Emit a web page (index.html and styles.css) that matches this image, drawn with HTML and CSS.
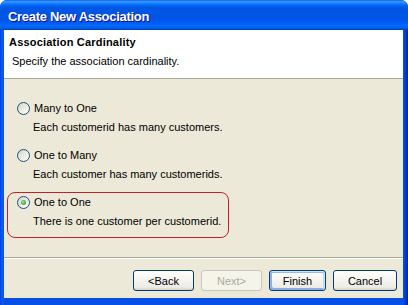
FILE: index.html
```html
<!DOCTYPE html>
<html>
<head>
<meta charset="utf-8">
<link rel="stylesheet" href="styles.css">
</head>
<body>
<div class="window">
  <div class="titlebar"><span class="title">Create New Association</span></div>
  <div class="client">
    <div class="header">
      <div class="h-title">Association Cardinality</div>
      <div class="h-desc">Specify the association cardinality.</div>
    </div>
    <div class="body">
      <div class="option">
        <div class="opt-label"><span class="radio"></span><span>Many to One</span></div>
        <div class="opt-desc">Each customerid has many customers.</div>
      </div>
      <div class="option">
        <div class="opt-label"><span class="radio"></span><span>One to Many</span></div>
        <div class="opt-desc">Each customer has many customerids.</div>
      </div>
      <div class="option selected">
        <div class="opt-label"><span class="radio checked"></span><span>One to One</span></div>
        <div class="opt-desc">There is one customer per customerid.</div>
      </div>
    </div>
    <div class="footer">
      <button class="btn btn-back">&lt;Back</button>
      <button class="btn btn-next" disabled>Next&gt;</button>
      <button class="btn btn-finish">Finish</button>
      <button class="btn btn-cancel">Cancel</button>
    </div>
  </div>
</div>
</body>
</html>
```

FILE: styles.css
```css
html, body {
  margin: 0;
  padding: 0;
  background: #ffffff;
}
body {
  font-family: "Liberation Sans", Arial, sans-serif;
  font-size: 11px;
  color: #000;
}
.window {
  width: 408px;
  height: 305px;
  display: flex;
  flex-direction: column;
  background: linear-gradient(90deg, #0831D9 0, #0858EE 1px, #0A5AF0 3px, #0650E8 4px, #0650E8 403px, #0044D6 405px, #001FA0 408px);
  border-radius: 7px 7px 0 0;
  overflow: hidden;
  box-sizing: border-box;
}
.titlebar {
  height: 30px;
  flex: none;
  display: flex;
  align-items: center;
  padding: 3px 0 0 8px;
  box-sizing: border-box;
  background: linear-gradient(to bottom, #0058EE 0%, #3A93FF 4%, #288EFF 8%, #127DFF 12%, #036FFC 16%, #0262EE 20%, #0057E5 24%, #0054E3 56%, #0055EB 66%, #005BF5 76%, #026AFE 86%, #0062EF 92%, #0052D6 96%, #0040AB 100%);
}
.title {
  color: #fff;
  font-weight: bold;
  font-size: 13px;
  letter-spacing: -0.3px;
  text-shadow: 1px 1px #0F1089;
}
.client {
  flex: 1;
  margin: 0 5px 7px 4px;
  background: #ECE9D8;
  display: flex;
  flex-direction: column;
}
.header {
  height: 49px;
  flex: none;
  background: #fff;
  box-sizing: border-box;
  padding: 5px 0 0 5px;
  border-bottom: 1px solid #ACA899;
}
.h-title {
  font-weight: bold;
  line-height: 14px;
  letter-spacing: 0.2px;
}
.h-desc {
  line-height: 14px;
  margin-top: 5px;
  padding-left: 3px;
}
.body {
  flex: 1;
  padding: 19px 0 0 3px;
  border-bottom: 1px solid #ACA899;
}
.option {
  width: 222px;
  height: 46px;
  box-sizing: border-box;
  border: 1px solid transparent;
  border-radius: 8px;
  padding: 2px 0 0 9px;
  margin-bottom: 1px;
}
.option.selected {
  border-color: #CC1E2A;
}
.opt-label {
  display: flex;
  align-items: center;
  gap: 4px;
  height: 14px;
  line-height: 14px;
}
.opt-desc {
  margin-top: 5px;
  margin-left: 16px;
  line-height: 14px;
}
.radio {
  width: 13px;
  height: 13px;
  box-sizing: border-box;
  border-radius: 50%;
  border: 1px solid #1C5180;
  background: linear-gradient(135deg, #D6D3C6 0%, #E9E8E0 45%, #FFFFFF 100%);
  display: flex;
  align-items: center;
  justify-content: center;
  flex: none;
}
.radio.checked::after {
  content: "";
  width: 5px;
  height: 5px;
  border-radius: 50%;
  background: radial-gradient(circle at 40% 40%, #A9E29D 0%, #4DBB45 50%, #21A121 100%);
}
.footer {
  flex: none;
  border-top: 1px solid #fff;
  padding: 11px 6px 7px 0;
  display: flex;
  justify-content: flex-end;
  gap: 7px;
}
.btn {
  height: 21px;
  box-sizing: border-box;
  border: 1px solid #003C74;
  border-radius: 3px;
  background: linear-gradient(to bottom, #FFFFFF 0%, #F7F6F1 40%, #ECEBE6 86%, #D6D0C5 100%);
  font-family: "Liberation Sans", Arial, sans-serif;
  font-size: 11px;
  color: #000;
  padding: 0;
  margin: 0;
}
.btn-back { width: 61px; }
.btn-next {
  width: 61px;
  border-color: #C9C7BA;
  color: #ACA899;
  background: #F5F4EA;
}
.btn-finish {
  width: 57px;
  box-shadow: inset -1px 1px #CEE7FF, inset 1px 2px #98B8EA, inset -2px 2px #BCD4F6, inset 1px -1px #89ADE4, inset 2px -2px #89ADE4;
}
.btn-cancel { width: 64px; }
```
